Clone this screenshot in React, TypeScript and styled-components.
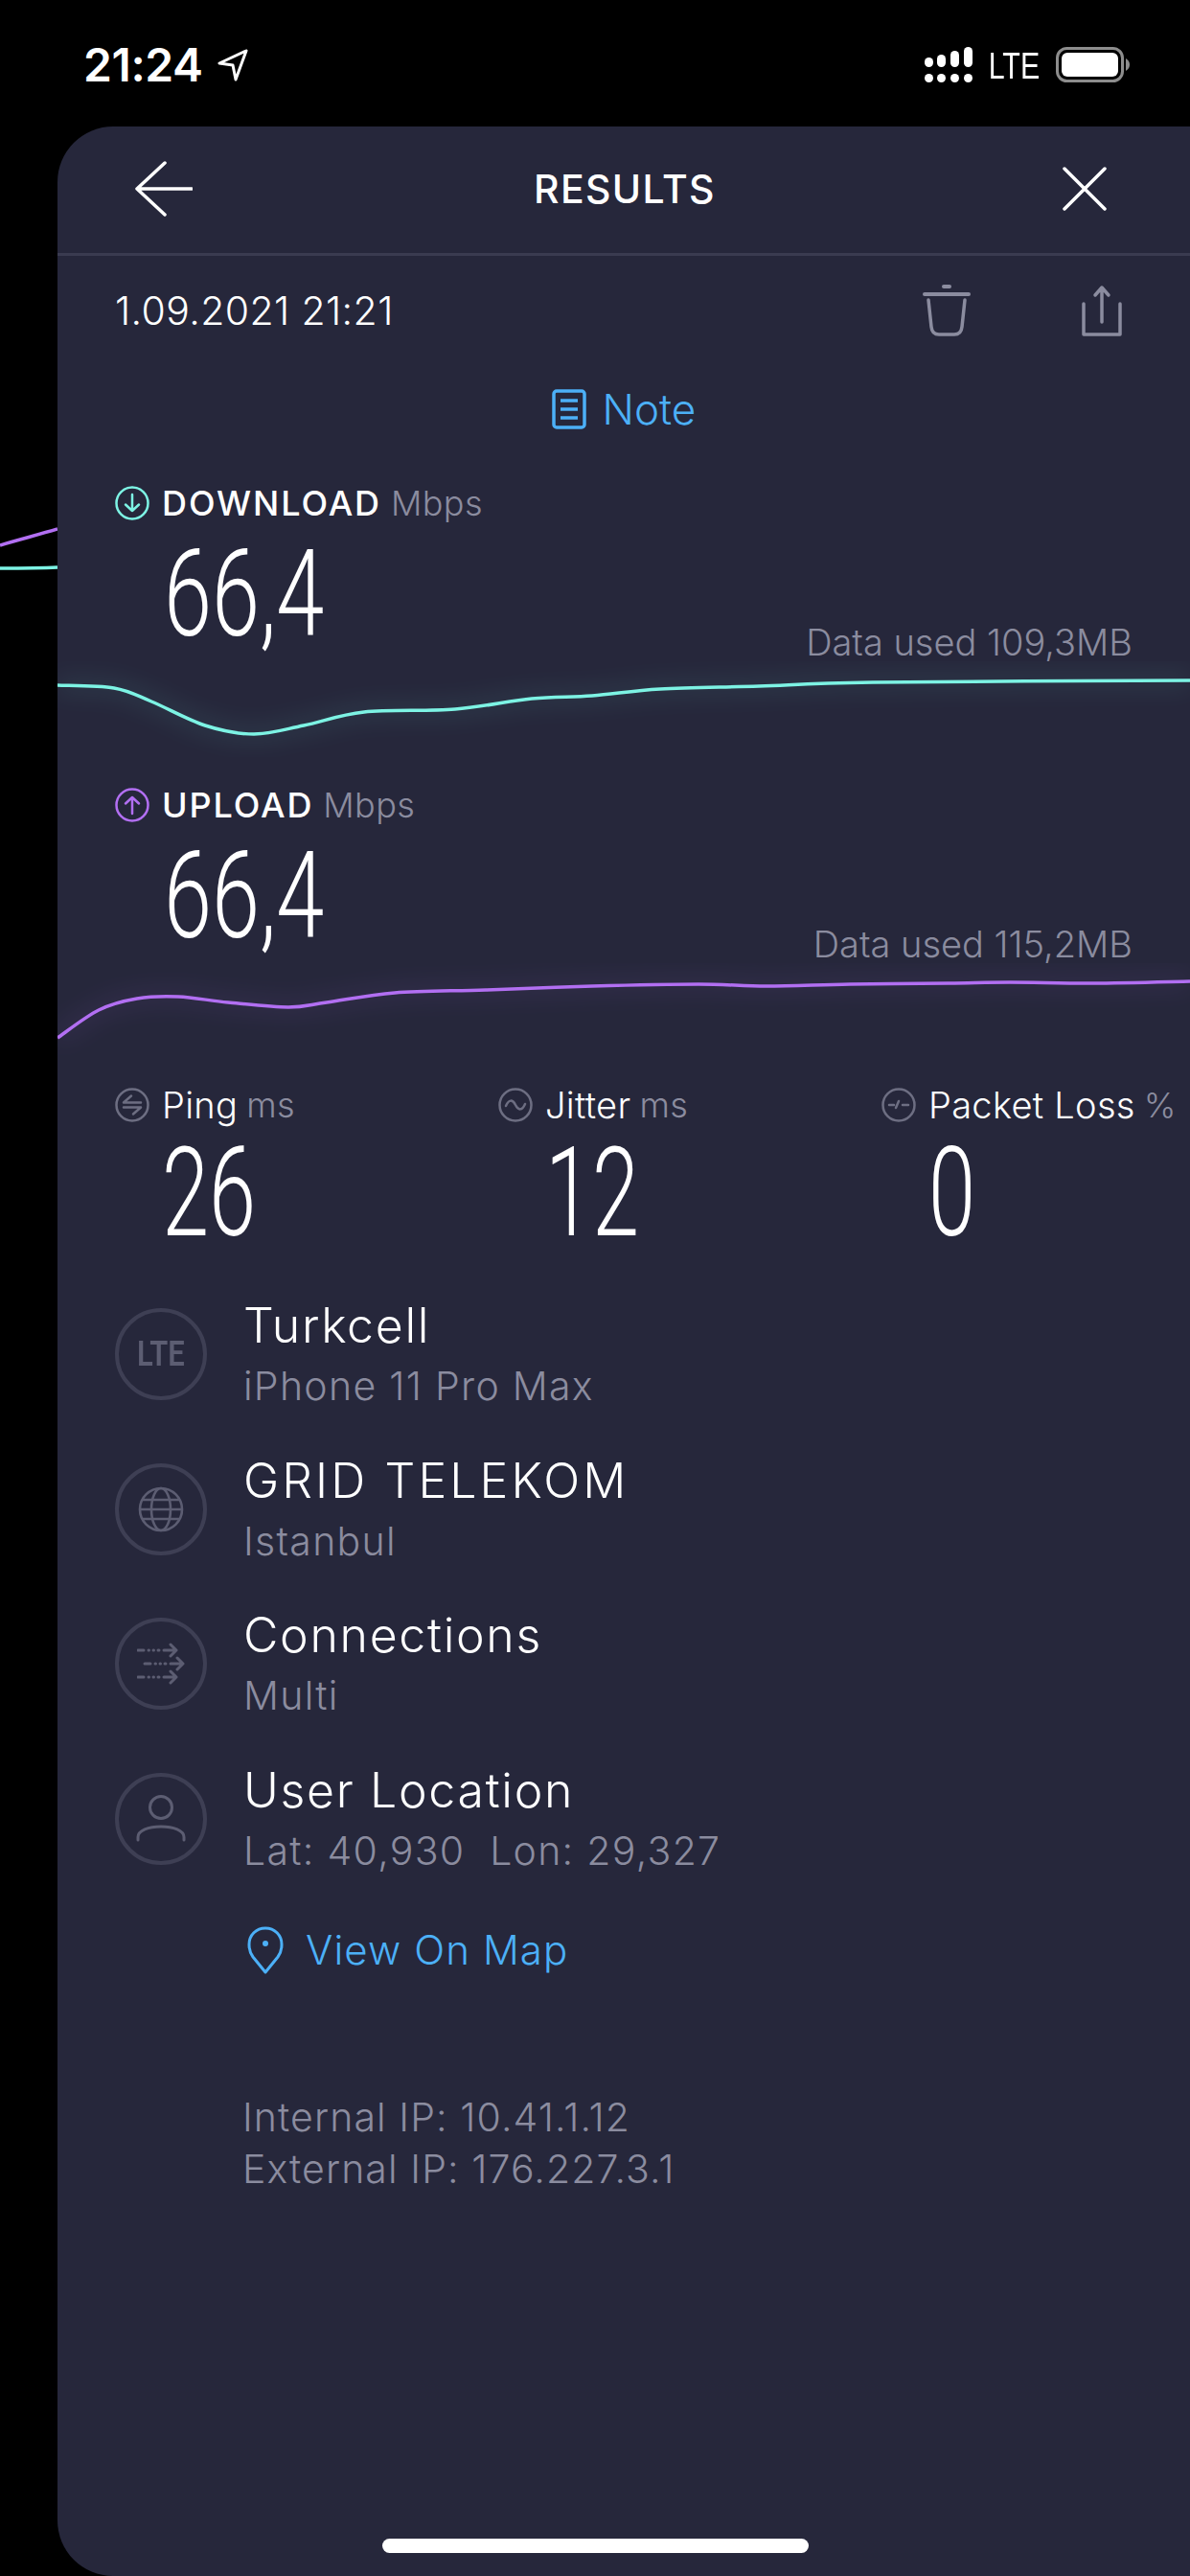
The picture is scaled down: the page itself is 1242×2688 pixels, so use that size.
import React from "react";
import styled, { createGlobalStyle } from "styled-components";

const GlobalStyle = createGlobalStyle`
  html, body { margin: 0; padding: 0; background: #000; }
  * { box-sizing: border-box; }
  body { font-family: "Inter", "Liberation Sans", sans-serif; }
`;

const TEAL = "#7df3e4";
const PURPLE = "#b26ff2";
const BLUE = "#4cb0f7";
const GREY = "#8b8c9f";

const Screen = styled.div`
  position: relative;
  width: 1242px;
  height: 2688px;
  overflow: hidden;
  background: #000;
`;

const StatusBar = styled.div`
  height: 132px;
  padding: 49px 62px 0 87px;
  display: flex;
  align-items: flex-start;
  color: #fff;
`;

const Time = styled.span`
  font-size: 48px;
  font-weight: 600;
  line-height: 37px;
  letter-spacing: -0.4px;
  margin-right: 14px;
`;

const StatusRight = styled.div`
  margin-left: auto;
  display: flex;
  align-items: center;
  height: 37px;
`;

const Lte = styled.span`
  font-family: "Liberation Sans", sans-serif;
  font-size: 38px;
  line-height: 37px;
  margin: 3px 10px 0;
  transform: scaleX(0.8);
`;

const Body = styled.div`
  display: flex;
  height: 2556px;
`;

const Gutter = styled.svg`
  display: block;
  width: 60px;
  height: 100px;
  margin-top: 368px;
  flex: none;
`;

const Panel = styled.div`
  flex: 1;
  min-width: 0;
  background: #26273b;
  border-radius: 58px 0 0 58px;
`;

const Header = styled.div`
  height: 135px;
  padding: 0 87px 2px 81px;
  display: flex;
  align-items: center;
  justify-content: space-between;
  border-bottom: 3px solid #3a3b50;
`;

const Title = styled.h1`
  margin: 0 0 0 -6px;
  font-size: 41px;
  font-weight: 500;
  letter-spacing: 1.3px;
  color: #fff;
`;

const DateRow = styled.div`
  height: 114px;
  padding: 0 71px 0 60px;
  display: flex;
  align-items: center;
`;

const DateText = styled.span`
  font-size: 41px;
  font-weight: 300;
  color: #fff;
  letter-spacing: 0.4px;
  margin-right: auto;
`;

const ActionGroup = styled.div`
  display: flex;
  align-items: center;
  gap: 116px;
`;

const NoteRow = styled.div`
  height: 92px;
  margin-bottom: 2px;
  display: flex;
  align-items: center;
  justify-content: center;
  gap: 17px;
  font-size: 44px;
  font-weight: 300;
  color: ${BLUE};
`;

const LabelRow = styled.div`
  height: 100px;
  padding-left: 60px;
  display: flex;
  align-items: center;
  gap: 13px;
`;

const LabelStrong = styled.span`
  font-size: 36px;
  font-weight: 500;
  letter-spacing: 1.9px;
  color: #fff;
  margin-right: -3px;
`;

const Unit = styled.span`
  font-size: 36px;
  font-weight: 300;
  letter-spacing: 0.4px;
  color: ${GREY};
`;

const ValueRow = styled.div`
  height: 115px;
  padding: 0 60px 0 111px;
  display: flex;
  align-items: flex-end;
  justify-content: space-between;
`;

const BigValue = styled.div`
  align-self: flex-start;
  font-family: "Roboto", sans-serif;
  font-weight: 300;
  font-size: 127px;
  line-height: 90px;
  color: #fff;
  transform: scaleX(0.71);
  transform-origin: left center;
  height: 90px;
`;

const DataUsed = styled.span`
  font-size: 38px;
  font-weight: 300;
  color: ${GREY};
  line-height: 40px;
`;

const Chart = styled.svg`
  display: block;
  width: 1182px;
  height: 100px;
`;

const MetricGrid = styled.div`
  padding: 2px 0 0 60px;
  display: grid;
  grid-template-columns: 400px 400px 1fr;
`;

const MetricLabel = styled.div`
  height: 92px;
  display: flex;
  align-items: center;
  gap: 13px;
  white-space: nowrap;
`;

const MetricName = styled.span`
  font-size: 38px;
  font-weight: 300;
  letter-spacing: 0.3px;
  color: #fff;
  margin-right: -4px;
`;

const MetricValue = styled(BigValue)`
  padding-left: 72px;
  height: 92px;
  line-height: 92px;
  font-size: 130px;
  transform: scaleX(0.68);
`;

const InfoList = styled.div`
  margin-top: 74px;
  padding-left: 60px;
  display: flex;
  flex-direction: column;
  gap: 65.5px;
`;

const InfoRow = styled.div`
  height: 96px;
  display: flex;
  align-items: center;
  gap: 38px;
`;

const Ring = styled.div`
  width: 96px;
  height: 96px;
  flex: none;
  border-radius: 50%;
  border: 4px solid #3e3f54;
  display: flex;
  align-items: center;
  justify-content: center;
  color: #5c5d72;
`;

const RingText = styled.span`
  font-family: "Roboto", sans-serif;
  font-size: 36px;
  font-weight: 600;
  transform: scaleX(0.86);
`;

const InfoText = styled.div`
  display: flex;
  flex-direction: column;
  gap: 14px;
`;

const InfoTitle = styled.div<{ $spacing?: number }>`
  font-size: 50px;
  font-weight: 300;
  line-height: 52px;
  letter-spacing: ${(p) => p.$spacing ?? 1.7}px;
  color: #fff;
`;

const InfoSub = styled.div`
  font-size: 41px;
  font-weight: 300;
  line-height: 46px;
  letter-spacing: 1.3px;
  color: ${GREY};
  white-space: pre;
`;

const MapLink = styled.div`
  height: 50px;
  margin: 64px 0 0 198px;
  display: flex;
  align-items: center;
  gap: 23px;
  font-size: 42px;
  font-weight: 300;
  letter-spacing: 1.1px;
  color: ${BLUE};
`;

const IpBlock = styled.div`
  margin: 122px 0 0 193px;
  font-size: 41px;
  font-weight: 300;
  line-height: 54px;
  letter-spacing: 1.1px;
  color: ${GREY};
`;

const HomeIndicator = styled.div`
  position: absolute;
  left: 399px;
  bottom: 24px;
  width: 445px;
  height: 15px;
  border-radius: 8px;
  background: #fff;
`;

type Point = [number, number];

// catmull-rom through the sampled points, so the line stays smooth
const smoothPath = (pts: Point[]) => {
  let d = `M${pts[0][0]} ${pts[0][1]}`;
  for (let i = 0; i < pts.length - 1; i++) {
    const p0 = pts[Math.max(i - 1, 0)];
    const p1 = pts[i];
    const p2 = pts[i + 1];
    const p3 = pts[Math.min(i + 2, pts.length - 1)];
    const c1x = p1[0] + (p2[0] - p0[0]) / 6;
    const c1y = p1[1] + (p2[1] - p0[1]) / 6;
    const c2x = p2[0] - (p3[0] - p1[0]) / 6;
    const c2y = p2[1] - (p3[1] - p1[1]) / 6;
    d += ` C${c1x} ${c1y} ${c2x} ${c2y} ${p2[0]} ${p2[1]}`;
  }
  return d;
};

const downloadLine = smoothPath([
  [60, 714], [119, 717], [158, 731], [214, 756], [265, 765], [317, 756], [380, 742],
  [475, 739], [555, 728], [618, 725], [689, 718], [792, 715], [911, 711], [1242, 709],
]);
const uploadLine = smoothPath([
  [60, 1081], [103, 1052], [143, 1040], [186, 1038], [238, 1044], [301, 1049], [341, 1044],
  [412, 1034], [507, 1031], [618, 1027], [729, 1025], [800, 1027], [887, 1025], [990, 1024],
  [1054, 1023], [1141, 1024], [1242, 1022],
]);

const GlowLine: React.FC<{ d: string; color: string; id: string }> = ({ d, color, id }) => (
  <>
    <defs>
      <filter id={id} x="-5%" y="-60%" width="110%" height="220%">
        <feGaussianBlur stdDeviation="12" />
      </filter>
    </defs>
    <path d={d} fill="none" stroke={color} strokeWidth="14" opacity="0.1" filter={`url(#${id})`} />
    <path d={d} fill="none" stroke={color} strokeWidth="3.5" />
  </>
);

const RoundIcon: React.FC<{ color: string; children: React.ReactNode }> = ({ color, children }) => (
  <svg width="36" height="36" viewBox="0 0 36 36" fill="none" stroke={color} strokeWidth="2.5" strokeLinecap="round" strokeLinejoin="round" style={{ flex: "none" }}>
    <circle cx="18" cy="18" r="16.5" />
    {children}
  </svg>
);

const Metric: React.FC<{ name: string; unit: string; value: string; icon: React.ReactNode }> = ({ name, unit, value, icon }) => (
  <div>
    <MetricLabel>
      <RoundIcon color="#6d6e82">{icon}</RoundIcon>
      <MetricName>{name}</MetricName>
      <Unit>{unit}</Unit>
    </MetricLabel>
    <MetricValue>{value}</MetricValue>
  </div>
);

export default function App() {
  return (
    <Screen>
      <GlobalStyle />
      <StatusBar>
        <Time>21:24</Time>
        <svg width="33" height="34" viewBox="0 0 33 34" fill="none" stroke="#fff" strokeWidth="3" strokeLinejoin="round" style={{ marginTop: 2 }}>
          <path d="M31 2 L3 15 L17 17 L20 32 Z" />
        </svg>
        <StatusRight>
          <svg width="50" height="37" viewBox="0 0 50 37" fill="#fff">
            <rect x="0" y="11" width="9" height="10" rx="4.5" />
            <rect x="13" y="8" width="9" height="13" rx="4.5" />
            <rect x="27" y="4" width="9" height="17" rx="4.5" />
            <rect x="41" y="0" width="9" height="21" rx="4.5" />
            <rect x="0" y="28" width="9" height="9" rx="4.5" />
            <rect x="13" y="28" width="9" height="9" rx="4.5" />
            <rect x="27" y="28" width="9" height="9" rx="4.5" />
            <rect x="41" y="28" width="9" height="9" rx="4.5" />
          </svg>
          <Lte>LTE</Lte>
          <svg width="78" height="37" viewBox="0 0 78 37" fill="none">
            <rect x="1.5" y="1.5" width="68" height="34" rx="10" stroke="#8d8d8d" strokeWidth="3" />
            <rect x="6" y="6" width="59" height="25" rx="6" fill="#fff" />
            <path d="M73 12 C76 14 77 16 77 18.5 C77 21 76 23 73 25 Z" fill="#8d8d8d" />
          </svg>
        </StatusRight>
      </StatusBar>

      <Body>
        <Gutter viewBox="0 500 60 100">
          <path d="M0 569 C20 563 40 558 60 552" fill="none" stroke={PURPLE} strokeWidth="3.5" />
          <path d="M0 593 C20 593 40 593 60 592" fill="none" stroke={TEAL} strokeWidth="3.5" />
        </Gutter>
        <Panel>
          <Header>
            <svg width="60" height="58" viewBox="0 0 60 58" fill="none" stroke="#fff" strokeWidth="3.5" strokeLinecap="round" strokeLinejoin="round">
              <path d="M59 29 H2 M31 2 L2 29 L31 56" />
            </svg>
            <Title>RESULTS</Title>
            <svg width="46" height="46" viewBox="0 0 46 46" fill="none" stroke="#fff" strokeWidth="3.5" strokeLinecap="round">
              <path d="M2 2 L44 44 M44 2 L2 44" />
            </svg>
          </Header>

          <DateRow>
            <DateText>1.09.2021 21:21</DateText>
            <ActionGroup>
              <svg width="50" height="54" viewBox="0 0 50 54" fill="none" stroke="#8b8c9f" strokeWidth="3.5" strokeLinecap="round">
                <path d="M2 10 H48" strokeWidth="4" />
                <path d="M22 2 H28" strokeWidth="4" />
                <path d="M6 16 L9 44 C9.5 49 12 52 17 52 H33 C38 52 40.5 49 41 44 L44 16" />
              </svg>
              <svg width="42" height="54" viewBox="0 0 42 54" fill="none" stroke="#8b8c9f" strokeWidth="3.5" strokeLinecap="round" strokeLinejoin="round">
                <path d="M21 3 V39 M14 11 L21 3 L28 11" />
                <path d="M2 20 V52 H40 V20" />
              </svg>
            </ActionGroup>
          </DateRow>

          <NoteRow>
            <svg width="36" height="42" viewBox="0 0 36 42" fill="none" stroke={BLUE} strokeWidth="3.5">
              <rect x="2" y="2" width="32" height="38" rx="3" />
              <path d="M9 12 H27 M9 21 H27 M9 30 H27" />
            </svg>
            Note
          </NoteRow>

          <LabelRow>
            <RoundIcon color={TEAL}>
              <path d="M18 9 V26 M11 19.5 L18 26 L25 19.5" />
            </RoundIcon>
            <LabelStrong>DOWNLOAD</LabelStrong>
            <Unit>Mbps</Unit>
          </LabelRow>
          <ValueRow>
            <BigValue>66,4</BigValue>
            <DataUsed>Data used 109,3MB</DataUsed>
          </ValueRow>
          <Chart viewBox="60 690 1182 98">
            <GlowLine d={downloadLine} color={TEAL} id="dl-glow" />
          </Chart>

          <LabelRow>
            <RoundIcon color={PURPLE}>
              <path d="M18 27 V10 M11 16.5 L18 10 L25 16.5" />
            </RoundIcon>
            <LabelStrong>UPLOAD</LabelStrong>
            <Unit>Mbps</Unit>
          </LabelRow>
          <ValueRow>
            <BigValue>66,4</BigValue>
            <DataUsed>Data used 115,2MB</DataUsed>
          </ValueRow>
          <Chart viewBox="60 1003 1182 100">
            <GlowLine d={uploadLine} color={PURPLE} id="ul-glow" />
          </Chart>

          <MetricGrid>
            <Metric
              name="Ping"
              unit="ms"
              value="26"
              icon={<path d="M9 15.5 L17 8.5 M9 15.5 H27 M9 20.5 H27 L19 27.5" />}
            />
            <Metric
              name="Jitter"
              unit="ms"
              value="12"
              icon={<path d="M8 19 C11 12 15 12 18 18 C21 24 25 24 28 17" />}
            />
            <Metric
              name="Packet Loss"
              unit="%"
              value="0"
              icon={<path d="M8 18 H13 M15 21 L18 14 M22 18 H28" />}
            />
          </MetricGrid>

          <InfoList>
            <InfoRow>
              <Ring>
                <RingText>LTE</RingText>
              </Ring>
              <InfoText>
                <InfoTitle>Turkcell</InfoTitle>
                <InfoSub>iPhone 11 Pro Max</InfoSub>
              </InfoText>
            </InfoRow>
            <InfoRow>
              <Ring>
                <svg width="48" height="48" viewBox="0 0 48 48" fill="none" stroke="currentColor" strokeWidth="2.6">
                  <circle cx="24" cy="24" r="22" />
                  <ellipse cx="24" cy="24" rx="10" ry="22" />
                  <path d="M2 24 H46 M5 14 H43 M5 34 H43" />
                </svg>
              </Ring>
              <InfoText>
                <InfoTitle $spacing={3.1}>GRID TELEKOM</InfoTitle>
                <InfoSub>Istanbul</InfoSub>
              </InfoText>
            </InfoRow>
            <InfoRow>
              <Ring>
                <svg width="50" height="44" viewBox="0 0 50 44" fill="none" stroke="currentColor" strokeWidth="3" strokeLinecap="round" strokeLinejoin="round">
                  <path d="M1 8 H7 M12 8 H12.5 M17 8 H17.5 M22 8 H23 M28 8 H41 M35 2 L41 8 L35 14" />
                  <path d="M8 22 H14 M19 22 H19.5 M24 22 H24.5 M29 22 H30 M35 22 H48 M42 16 L48 22 L42 28" />
                  <path d="M1 36 H7 M12 36 H12.5 M17 36 H17.5 M22 36 H23 M28 36 H41 M35 30 L41 36 L35 42" />
                </svg>
              </Ring>
              <InfoText>
                <InfoTitle>Connections</InfoTitle>
                <InfoSub>Multi</InfoSub>
              </InfoText>
            </InfoRow>
            <InfoRow>
              <Ring>
                <svg width="52" height="50" viewBox="0 0 52 50" fill="none" stroke="currentColor" strokeWidth="3" strokeLinecap="round">
                  <circle cx="26" cy="13" r="11.5" />
                  <path d="M2 47 V44 C2 37 13 33 26 33 C39 33 50 37 50 44 V47" />
                </svg>
              </Ring>
              <InfoText>
                <InfoTitle>User Location</InfoTitle>
                <InfoSub>{"Lat: 40,930  Lon: 29,327"}</InfoSub>
              </InfoText>
            </InfoRow>
          </InfoList>

          <MapLink>
            <svg width="38" height="50" viewBox="0 0 38 50" fill="none" stroke={BLUE} strokeWidth="3" strokeLinejoin="round">
              <path d="M19 48 L6 32 C3 28 2 24 2 19 C2 9 9.5 2 19 2 C28.5 2 36 9 36 19 C36 24 35 28 32 32 Z" />
              <circle cx="19" cy="18" r="3" fill={BLUE} stroke="none" />
            </svg>
            View On Map
          </MapLink>

          <IpBlock>
            Internal IP: 10.41.1.12
            <br />
            External IP: 176.227.3.1
          </IpBlock>
        </Panel>
      </Body>
      <HomeIndicator />
    </Screen>
  );
}
